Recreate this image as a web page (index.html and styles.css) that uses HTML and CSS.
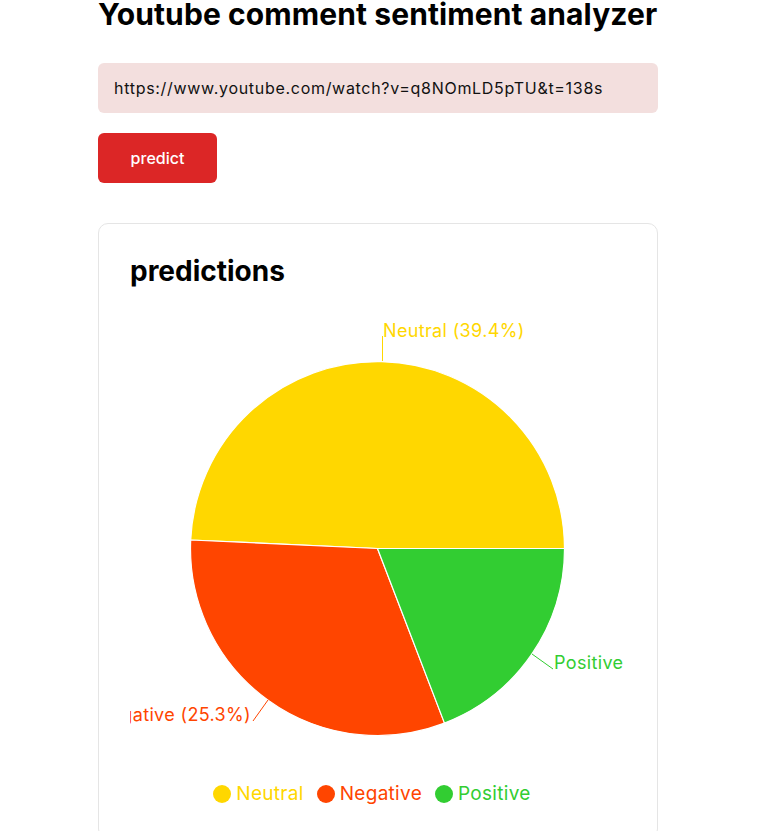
FILE: index.html
```html
<!DOCTYPE html>
<html lang="en">
<head>
<meta charset="utf-8">
<title>Youtube comment sentiment analyzer</title>
<link rel="stylesheet" href="styles.css">
</head>
<body>
<main class="page">
  <h1 class="title">Youtube comment sentiment analyzer</h1>
  <input class="url-input" type="text" value="https://www.youtube.com/watch?v=q8NOmLD5pTU&amp;t=138s">
  <button class="predict-btn" type="button">predict</button>
  <section class="card">
    <h2 class="card-title">predictions</h2>
    <svg class="pie" width="496" height="473" viewBox="130 287 496 473" xmlns="http://www.w3.org/2000/svg">
      <g stroke="#ffffff" stroke-width="1.2" stroke-linejoin="round">
        <path d="M377.5 548.5 L564.5 548.5 A187 187 0 0 0 190.7 540 Z" fill="#FFD700"/>
        <path d="M377.5 548.5 L190.7 540 A187 187 0 0 0 444.5 723.1 Z" fill="#FF4500"/>
        <path d="M377.5 548.5 L444.5 723.1 A187 187 0 0 0 564.5 548.5 Z" fill="#32CD32"/>
      </g>
      <line x1="382.5" y1="336" x2="382.5" y2="361" stroke="#FFD700" stroke-width="1"/>
      <text x="383" y="337" fill="#FFD700" class="pie-label">Neutral (39.4%)</text>
      <line x1="253" y1="721" x2="268" y2="700" stroke="#FF4500" stroke-width="1"/>
      <text x="251" y="721" fill="#FF4500" class="pie-label" text-anchor="end">Negative (25.3%)</text>
      <line x1="532" y1="654" x2="553" y2="669" stroke="#32CD32" stroke-width="1"/>
      <text x="554" y="669" fill="#32CD32" class="pie-label">Positive</text>
    </svg>
    <ul class="legend">
      <li class="legend-item neutral"><span class="dot"></span>Neutral</li>
      <li class="legend-item negative"><span class="dot"></span>Negative</li>
      <li class="legend-item positive"><span class="dot"></span>Positive</li>
    </ul>
  </section>
</main>
</body>
</html>
```

FILE: styles.css
```css
* {
  box-sizing: border-box;
}

html, body {
  margin: 0;
  padding: 0;
  background: #ffffff;
}

body {
  font-family: Inter, "Liberation Sans", sans-serif;
  color: #111111;
}

.page {
  width: 560px;
  margin: 0 0 0 98px;
  display: flex;
  flex-direction: column;
  align-items: flex-start;
}

.title {
  margin: 0 0 35px;
  font-size: 30px;
  line-height: 28px;
  font-weight: 700;
  letter-spacing: 0.1px;
  color: #000000;
  white-space: nowrap;
}

.url-input {
  width: 100%;
  height: 50px;
  border: none;
  border-radius: 6px;
  background: #F3DFDE;
  padding: 0 16px;
  font-family: inherit;
  font-size: 16px;
  letter-spacing: 0.7px;
  color: #111111;
  outline: none;
}

.predict-btn {
  margin-top: 20px;
  width: 119px;
  height: 50px;
  border: none;
  border-radius: 6px;
  background: #DC2626;
  color: #ffffff;
  font-family: inherit;
  font-size: 16px;
  font-weight: 500;
  cursor: pointer;
}

.card {
  margin-top: 40px;
  width: 100%;
  border: 1px solid #E5E5E5;
  border-radius: 10px;
  padding: 31px 31px 32px;
  display: flex;
  flex-direction: column;
}

.card-title {
  margin: 0;
  font-size: 28px;
  line-height: 32px;
  font-weight: 700;
  color: #000000;
}

.pie {
  display: block;
  overflow: hidden;
}

.pie-label {
  font-family: Inter, "Liberation Sans", sans-serif;
  font-size: 18px;
  letter-spacing: 0.35px;
}

.legend {
  list-style: none;
  margin: 22px 0 0;
  padding: 0 12px 0 0;
  display: flex;
  justify-content: center;
  gap: 13px;
}

.legend-item {
  display: flex;
  align-items: center;
  gap: 5px;
  font-size: 19px;
  line-height: 24px;
  letter-spacing: 0.3px;
}

.dot {
  width: 18px;
  height: 18px;
  border-radius: 50%;
}

.neutral { color: #FFD700; }
.neutral .dot { background: #FFD700; }
.negative { color: #FF4500; }
.negative .dot { background: #FF4500; }
.positive { color: #32CD32; }
.positive .dot { background: #32CD32; }
```
